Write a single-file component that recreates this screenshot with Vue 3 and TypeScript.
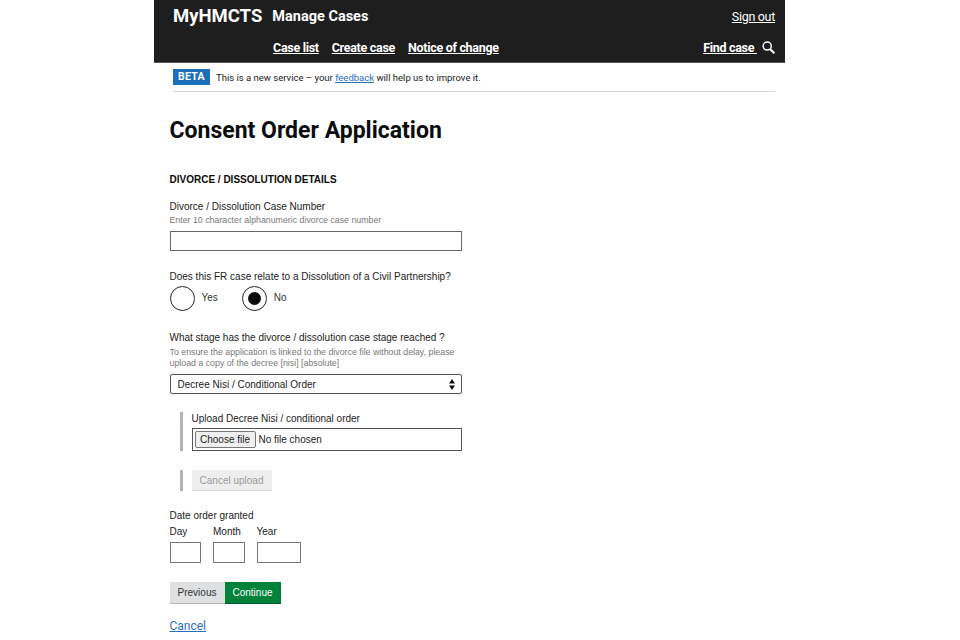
<template>
  <div class="page">
    <header class="site-header">
      <div class="header-top">
        <div class="brand">
          <span class="logo">MyHMCTS</span>
          <span class="service">Manage Cases</span>
        </div>
        <a class="sign-out" href="#">Sign out</a>
      </div>
      <nav class="header-nav">
        <div class="nav-links">
          <a v-for="link in navLinks" :key="link" href="#">{{ link }}</a>
        </div>
        <div class="find-case">
          <a href="#">Find case&nbsp;</a>
          <svg width="13" height="13" viewBox="0 0 16 16" fill="none" stroke="#fff" stroke-width="1.8">
            <circle cx="6.4" cy="6.2" r="5" />
            <path d="M10 9.8 15.2 15.2" stroke-width="2.4" />
          </svg>
        </div>
      </nav>
    </header>

    <div class="phase-banner">
      <strong class="phase-tag">BETA</strong>
      <span>This is a new service – your <a href="#">feedback</a> will help us to improve it.</span>
    </div>

    <main class="content">
      <h1>Consent Order Application</h1>
      <h2>DIVORCE / DISSOLUTION DETAILS</h2>

      <label class="label">Divorce / Dissolution Case Number</label>
      <div class="hint">Enter 10 character alphanumeric divorce case number</div>
      <input class="text-input case-number" type="text" />

      <div class="label civil-label">Does this FR case relate to a Dissolution of a Civil Partnership?</div>
      <div class="radios">
        <div v-for="opt in radioOptions" :key="opt" class="radio">
          <span class="radio-circle" :class="{ checked: opt === selected }"></span>
          <span class="radio-text">{{ opt }}</span>
        </div>
      </div>

      <div class="label stage-label">What stage has the divorce / dissolution case stage reached ?</div>
      <div class="hint stage-hint">To ensure the application is linked to the divorce file without delay, please<br />upload a copy of the decree [nisi] [absolute]</div>
      <div class="select-box">
        <span>Decree Nisi / Conditional Order</span>
        <svg width="6" height="11" viewBox="0 0 6 11" fill="#111">
          <path d="M3 0 6 4.4H0Z" />
          <path d="M3 11 0 6.6H6Z" />
        </svg>
      </div>

      <div class="inset upload-inset">
        <div class="label">Upload Decree Nisi / conditional order</div>
        <div class="file-box">
          <span class="file-btn">Choose file</span>
          <span>No file chosen</span>
        </div>
      </div>
      <div class="inset cancel-inset">
        <span class="cancel-upload">Cancel upload</span>
      </div>

      <div class="label date-label">Date order granted</div>
      <div class="date-fields">
        <div v-for="field in dateFields" :key="field.name" class="date-field">
          <span class="label">{{ field.name }}</span>
          <input class="text-input date-input" type="text" :style="{ width: field.width + 'px' }" />
        </div>
      </div>

      <div class="actions">
        <span class="btn btn-prev">Previous</span>
        <span class="btn btn-next">Continue</span>
      </div>
      <a class="cancel-link" href="#">Cancel</a>
    </main>
  </div>
</template>

<script setup lang="ts">
const navLinks: string[] = ['Case list', 'Create case', 'Notice of change']
const radioOptions: string[] = ['Yes', 'No']
const selected = 'No'
const dateFields: { name: string; width: number }[] = [
  { name: 'Day', width: 31.5 },
  { name: 'Month', width: 31.5 },
  { name: 'Year', width: 44.5 }
]
</script>

<style scoped>
.page {
  width: 631px;
  height: 640px;
  margin-left: 154px;
  overflow: hidden;
  font-family: "Liberation Sans", Arial, sans-serif;
  color: #222;
}

.site-header {
  height: 63px;
  box-sizing: border-box;
  padding: 0 10px 0 19px;
  background: #1e1e1e;
  border-bottom: 1px solid #555;
  color: #fff;
  font-family: Roboto, sans-serif;
}

.site-header a {
  color: #fff;
}

.header-top {
  display: flex;
  justify-content: space-between;
  align-items: center;
  height: 32px;
}

.brand {
  display: flex;
  align-items: center;
  gap: 10px;
}

.logo {
  font-size: 18.5px;
  font-weight: 700;
}

.service {
  font-size: 14.5px;
  font-weight: 700;
}

.sign-out {
  font-size: 12.5px;
  letter-spacing: -0.3px;
}

.header-nav {
  display: flex;
  justify-content: space-between;
  align-items: center;
  height: 30px;
  padding-left: 100px;
}

.nav-links {
  display: flex;
  gap: 13px;
}

.nav-links a,
.find-case a {
  font-size: 12.5px;
  font-weight: 700;
  letter-spacing: -0.3px;
}

.find-case {
  display: flex;
  align-items: center;
  gap: 5px;
}

.phase-banner {
  display: flex;
  align-items: center;
  gap: 6px;
  height: 28px;
  margin: 0 10px 0 19px;
  border-bottom: 1px solid #d8d8d8;
  font-family: Roboto, sans-serif;
  font-size: 9.5px;
  color: #222;
}

.phase-banner a {
  color: #2a6ebb;
}

.phase-tag {
  width: 37px;
  height: 16px;
  line-height: 16px;
  text-align: center;
  background: #1d70b8;
  color: #fff;
  font-size: 10.5px;
  letter-spacing: 0.3px;
}

.content {
  padding: 0 0 0 15.5px;
  display: flex;
  flex-direction: column;
  align-items: flex-start;
}

h1 {
  margin: 24px 0 0;
  height: 30px;
  line-height: 30px;
  font-family: Roboto, sans-serif;
  font-size: 23px;
  font-weight: 700;
  color: #0b0c0c;
}

h2 {
  margin: 27px 0 0;
  height: 13px;
  line-height: 13px;
  font-size: 10px;
  font-weight: 700;
  color: #0b0c0c;
}

.label {
  display: block;
  font-size: 10px;
  line-height: 13px;
  color: #222;
}

h2 + .label {
  margin-top: 14px;
}

.hint {
  margin-top: 1px;
  font-size: 8.8px;
  line-height: 12px;
  color: #777;
}

.text-input {
  display: block;
  box-sizing: border-box;
  margin: 0;
  padding: 0;
  border: 1px solid #666;
  background: #fff;
  outline: none;
}

.case-number {
  width: 292.5px;
  height: 20px;
  margin-top: 5px;
}

.civil-label {
  margin-top: 19px;
}

.radios {
  display: flex;
  gap: 24px;
  margin-top: 3px;
}

.radio {
  display: flex;
  gap: 7px;
}

.radio-circle {
  box-sizing: border-box;
  display: flex;
  align-items: center;
  justify-content: center;
  width: 25px;
  height: 25px;
  border: 1.5px solid #222;
  border-radius: 50%;
}

.radio-circle.checked::after {
  content: "";
  width: 13px;
  height: 13px;
  border-radius: 50%;
  background: #0b0c0c;
}

.radio-text {
  margin-top: 5px;
  font-size: 10px;
  line-height: 13px;
  color: #333;
}

.stage-label {
  margin-top: 20px;
}

.stage-hint {
  margin-top: 3px;
  line-height: 11px;
}

.select-box {
  box-sizing: border-box;
  display: flex;
  justify-content: space-between;
  align-items: center;
  width: 292.5px;
  height: 20px;
  margin-top: 5px;
  padding: 0 6px 0 7px;
  border: 1px solid #555;
  border-radius: 2px;
  font-size: 10px;
  color: #222;
}

.inset {
  box-sizing: border-box;
  margin-left: 10px;
  padding-left: 9px;
  border-left: 3px solid #b1b4b6;
}

.upload-inset {
  margin-top: 18px;
  height: 39px;
}

.file-box {
  box-sizing: border-box;
  display: flex;
  align-items: center;
  gap: 3px;
  width: 270.5px;
  height: 23px;
  margin-top: 3px;
  padding-left: 2px;
  border: 1px solid #555;
  font-size: 10px;
  color: #222;
}

.file-btn {
  box-sizing: border-box;
  width: 61px;
  height: 17px;
  line-height: 15px;
  text-align: center;
  background: #efefef;
  border: 1px solid #777;
  border-radius: 2px;
}

.cancel-inset {
  margin-top: 19px;
  height: 21px;
}

.cancel-upload {
  display: block;
  width: 80px;
  height: 21px;
  line-height: 21px;
  text-align: center;
  font-size: 10px;
  color: #9a9a9a;
  background: #eeeeee;
  border-bottom: 1px solid #ddd;
  box-sizing: border-box;
}

.date-label {
  margin-top: 18px;
}

.date-fields {
  display: flex;
  gap: 12px;
  margin-top: 3px;
}

.date-field .label {
  margin-bottom: 4px;
}

.date-input {
  height: 21px;
  border: 1px solid #777;
}

.actions {
  display: flex;
  margin-top: 19px;
}

.btn {
  box-sizing: border-box;
  height: 22px;
  line-height: 22px;
  text-align: center;
  font-size: 10px;
}

.btn-prev {
  width: 55px;
  background: #dee0e2;
  border-bottom: 1px solid #b1b4b6;
  color: #333;
}

.btn-next {
  width: 56px;
  background: #00823b;
  border-bottom: 1px solid #005a30;
  color: #fff;
}

.cancel-link {
  margin-top: 15px;
  font-family: Roboto, sans-serif;
  font-size: 12px;
  color: #2a6ebb;
}
</style>
